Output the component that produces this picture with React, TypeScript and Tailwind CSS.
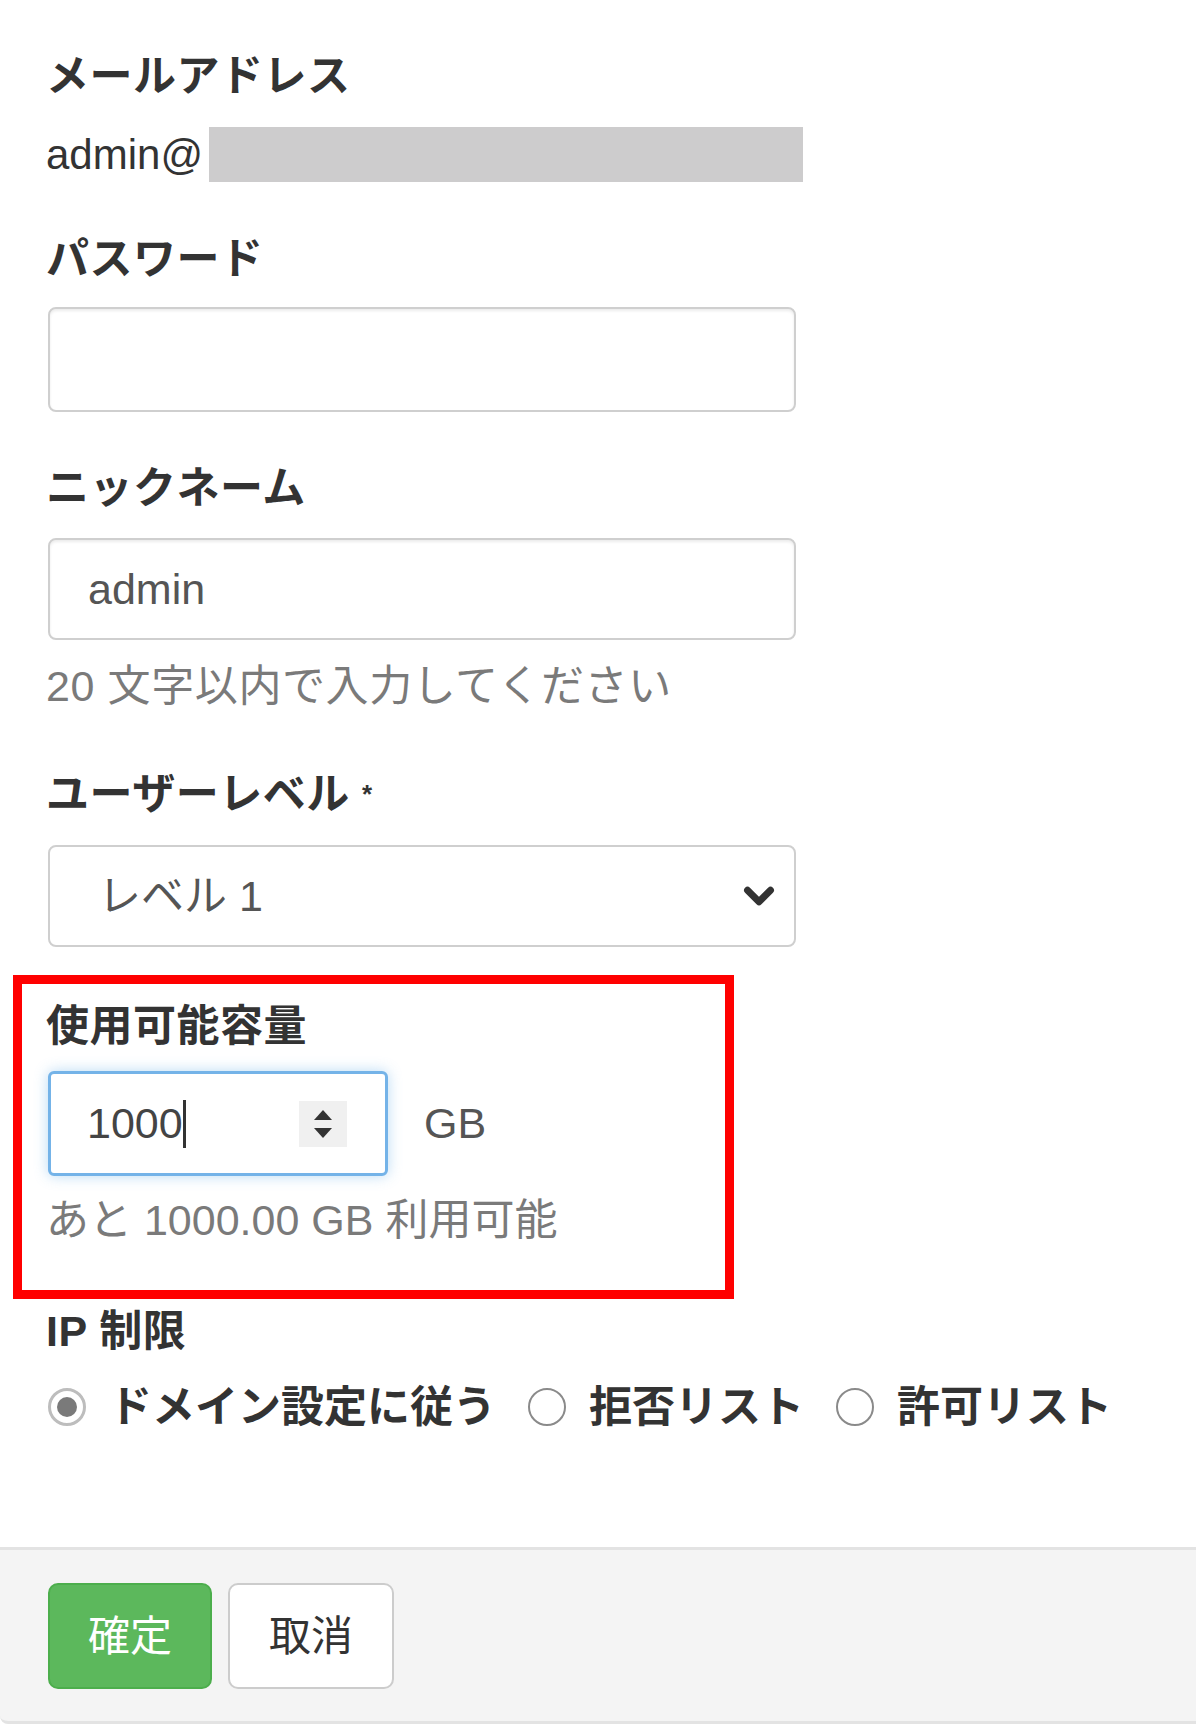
import { ChevronDown } from "lucide-react";

const font = "font-['Liberation_Sans','Noto_Sans_CJK_JP',sans-serif]";

function Label({ children, className = "" }: { children: React.ReactNode; className?: string }) {
  return (
    <div className={`text-[43px] leading-[60px] font-semibold tracking-[0.5px] text-[#333] ${className}`}>
      {children}
    </div>
  );
}

function TextBox({ value, className = "" }: { value?: string; className?: string }) {
  return (
    <div
      className={`ml-[2px] w-[748px] flex items-center rounded-[8px] border-2 border-[#cfcfcf] bg-white pl-[38px] text-[43px] text-[#555] shadow-[inset_0_2px_3px_rgba(0,0,0,0.08)] ${className}`}
    >
      {value}
    </div>
  );
}

function Radio({ checked, label }: { checked?: boolean; label: string }) {
  return (
    <div className="flex items-center">
      {checked ? (
        <span className="flex h-[38px] w-[38px] items-center justify-center rounded-full border-[3px] border-[#bdbdbd] bg-white">
          <span className="h-[20px] w-[20px] rounded-full bg-[#7a7a7a]" />
        </span>
      ) : (
        <span className="h-[38px] w-[38px] rounded-full border-2 border-[#8a8a8a] bg-white" />
      )}
      <span className="ml-[23px] text-[43px] font-semibold text-[#333]">{label}</span>
    </div>
  );
}

export default function App() {
  return (
    <div className={`${font} min-h-[1729px] w-[1196px] bg-white`}>
      <div className="pl-[46px] pt-[46px]">
        <Label>メールアドレス</Label>
        <div className="mt-[21px] flex h-[55px] items-center">
          <span className="text-[42px] text-[#333]">admin@</span>
          <span className="ml-[6px] h-[55px] w-[594px] bg-[#cdcccd]" />
        </div>

        <Label className="mt-[47px]">パスワード</Label>
        <TextBox className="mt-[18px] h-[105px]" />

        <Label className="mt-[46px]">ニックネーム</Label>
        <TextBox value="admin" className="mt-[20px] h-[102px]" />
        <div className="mt-[16px] text-[43px] leading-[60px] tracking-[0.6px] text-[#7a7a7a]">
          20 文字以内で入力してください
        </div>

        <Label className="mt-[48px]">
          ユーザーレベル <span className="text-[26px] align-top">*</span>
        </Label>
        <div className="mt-[21px] ml-[2px] flex h-[102px] w-[748px] items-center justify-between rounded-[8px] border-2 border-[#cfcfcf] bg-white pl-[48px] pr-[12px] text-[43px] text-[#555]">
          <span>レベル 1</span>
          <ChevronDown className="h-[46px] w-[46px] text-[#333]" strokeWidth={3.6} />
        </div>
      </div>

      {/* capacity block, outlined in red */}
      <div className="ml-[13px] mt-[28px] w-[721px] border-[9px] border-[#ff0000] pl-[24px] pt-[12px] pb-[40px]">
        <Label>使用可能容量</Label>
        <div className="mt-[15px] flex items-center">
          <div className="ml-[2px] flex h-[105px] w-[340px] items-center rounded-[6px] border-[3px] border-[#74b3e8] bg-white pl-[36px] pr-[38px] shadow-[0_0_14px_rgba(102,175,233,0.45)]">
            <span className="text-[43px] text-[#444]">1000</span>
            <span className="h-[48px] w-[3px] bg-[#333]" />
            <span className="ml-auto flex h-[46px] w-[48px] flex-col items-center justify-center gap-[6px] bg-[#f0f0f0]">
              <svg width="20" height="12" viewBox="0 0 20 12">
                <path d="M10 1 L19 11 L1 11 Z" fill="#333" />
              </svg>
              <svg width="20" height="12" viewBox="0 0 20 12">
                <path d="M1 1 L19 1 L10 11 Z" fill="#333" />
              </svg>
            </span>
          </div>
          <span className="ml-[36px] text-[43px] text-[#555]">GB</span>
        </div>
        <div className="mt-[14px] text-[43px] leading-[60px] text-[#7a7a7a]">
          あと 1000.00 GB 利用可能
        </div>
      </div>

      <div className="pl-[46px]">
        <Label className="mt-[2px]">IP 制限</Label>
        <div className="mt-[16px] flex h-[60px] items-center gap-[32px] pl-[2px]">
          <Radio checked label="ドメイン設定に従う" />
          <Radio label="拒否リスト" />
          <Radio label="許可リスト" />
        </div>
      </div>

      <div className="mt-[110px] rounded-bl-[8px] border-y-[3px] border-[#e3e3e3] bg-[#f4f4f4] pl-[48px] pt-[33px] pb-[32px]">
        <div className="flex gap-[16px]">
          <button className="h-[106px] w-[164px] rounded-[10px] border-2 border-[#4cae4c] bg-[#5cb85c] text-[42px] text-white">
            確定
          </button>
          <button className="h-[106px] w-[166px] rounded-[10px] border-2 border-[#cccccc] bg-white text-[42px] text-[#333]">
            取消
          </button>
        </div>
      </div>
    </div>
  );
}
